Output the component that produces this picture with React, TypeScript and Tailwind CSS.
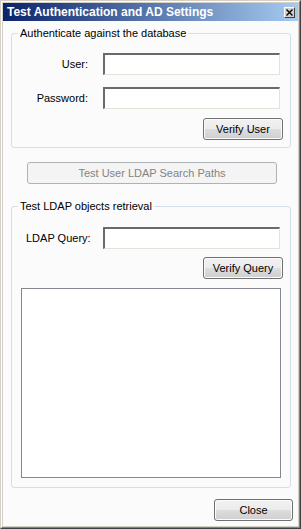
import React from "react";

const btn =
  "h-[22px] rounded-[3px] border border-[#707070] bg-[linear-gradient(to_bottom,#f2f2f2_0%,#ebebeb_50%,#dddddd_50%,#cfcfcf_100%)] shadow-[inset_0_0_0_1px_#fbfbfb] text-[11px] leading-none text-black";

const field =
  "h-[22px] w-[177px] bg-white border-t-2 border-l-2 border-b border-r border-t-[#6a6a6a] border-l-[#6a6a6a] border-b-[#e3e3dc] border-r-[#e3e3dc]";

function GroupBox({ title, children }: { title: string; children: React.ReactNode }) {
  return (
    <fieldset className="mr-[2px] rounded-[3px] border border-[#d5dfe5] p-0">
      <legend className="ml-[6px] px-[2px] text-[11px] leading-[12px] text-black">{title}</legend>
      {children}
    </fieldset>
  );
}

export default function App() {
  return (
    <div
      className="h-[529px] w-[301px] border border-t-[#d4d0c8] border-l-[#d4d0c8] border-r-[#404040] border-b-[#404040]"
      style={{ fontFamily: '"Liberation Sans", Arial, sans-serif' }}
    >
      <div className="flex h-full flex-col border border-t-white border-l-white border-r-[#808080] border-b-[#808080] bg-[#d4d0c8] p-[1px]">
        {/* title bar */}
        <div className="flex h-[18px] items-center justify-between bg-[linear-gradient(to_right,#0a246a,#a6caf0)] pl-[4px] pr-[3px]">
          <span className="text-[12px] font-bold leading-none text-white">
            Test Authentication and AD Settings
          </span>
          <div className="flex h-[11px] w-[11px] items-center justify-center border border-t-white border-l-white border-r-[#404040] border-b-[#404040] bg-[#d4d0c8]">
            <svg width="7" height="7" viewBox="0 0 7 7">
              <path d="M0.5 0.5 L6.5 6.5 M6.5 0.5 L0.5 6.5" stroke="#000" strokeWidth="1.4" />
            </svg>
          </div>
        </div>

        {/* body */}
        <div className="flex flex-1 flex-col bg-[#fbfbfb] pl-[8px] pr-[5px] pt-[6px]">
          <GroupBox title="Authenticate against the database">
            <div className="flex flex-col pb-[7px] pt-[14px]">
              <div className="flex items-center">
                <span className="w-[76px] text-right text-[11px] text-black">User:</span>
                <input className={`${field} ml-[15px]`} />
              </div>
              <div className="mt-[12px] flex items-center">
                <span className="w-[76px] text-right text-[11px] text-black">Password:</span>
                <input type="password" className={`${field} ml-[15px]`} />
              </div>
              <button className={`${btn} mr-[7px] mt-[9px] w-[80px] self-end`}>Verify User</button>
            </div>
          </GroupBox>

          <button className="mx-[16px] mt-[14px] h-[22px] rounded-[3px] border border-[#adb2b5] bg-[#f4f4f4] text-[11px] leading-none text-[#838383]">
            Test User LDAP Search Paths
          </button>

          <div className="mt-[16px]">
            <GroupBox title="Test LDAP objects retrieval">
              <div className="flex flex-col pb-[9px] pt-[15px]">
                <div className="flex items-center">
                  <span className="ml-[14px] w-[77px] text-[11px] text-black">LDAP Query:</span>
                  <input className={field} />
                </div>
                <button className={`${btn} mr-[7px] mt-[8px] w-[80px] self-end`}>Verify Query</button>
                <div className="ml-[9px] mt-[9px] h-[190px] w-[260px] border border-[#828790] bg-white" />
              </div>
            </GroupBox>
          </div>

          <div className="mt-[11px] flex justify-end">
            <button className={`${btn} h-[21px] w-[79px]`}>Close</button>
          </div>
        </div>
      </div>
    </div>
  );
}
